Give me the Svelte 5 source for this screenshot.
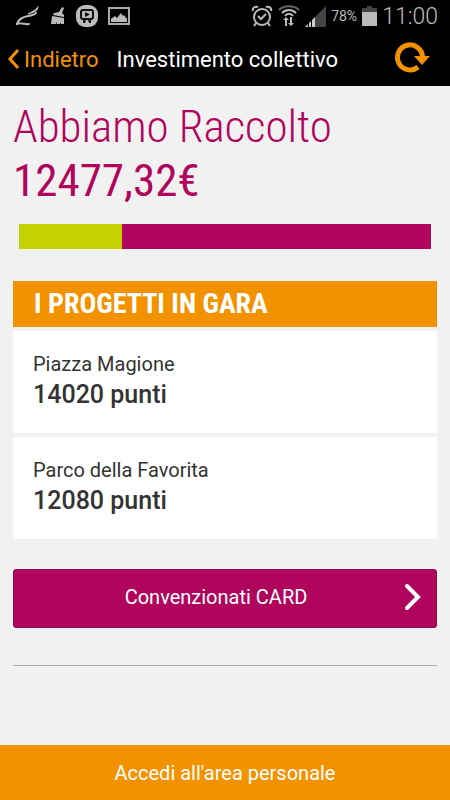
<script>
  let raised = "12477,32€";
  let progress = 25;

  let projects = [
    { id: 1, name: "Piazza Magione", points: 14020 },
    { id: 2, name: "Parco della Favorita", points: 12080 },
  ];
</script>

<div class="page">
  <!-- Status bar -->
  <div class="status-bar">
    <div class="status-group left">
      <svg width="24" height="22" viewBox="0 0 24 22" fill="none" stroke="#bbb" stroke-linecap="round">
        <path d="M20 8C16 12 10 10 6 13C4 14 2 16 1 19" stroke-width="2" />
        <path d="M1 19C5 17 9 20 13 19" stroke-width="2" />
        <path d="M22 2C22 6 17 8 12 9C15 7 19 6 22 2Z" fill="#bbb" />
      </svg>
      <svg width="16" height="20" viewBox="0 0 16 20">
        <path d="M12 1L14 2L12 7L14 9V11L3 9L4 7L9 6ZM2 10L14 12V18H11L10 16V18H7L6 16V18H1Z" fill="#bbb" />
      </svg>
      <svg width="22" height="22" viewBox="0 0 22 22">
        <rect width="22" height="22" rx="9" fill="#bbb" />
        <rect x="5" y="5" width="12" height="9" rx="2" fill="none" stroke="#111" stroke-width="2" />
        <path d="M9 7L14 9.5L9 12ZM7 15H10L9 18H7ZM12 15H15V18H13Z" fill="#111" />
      </svg>
      <svg width="22" height="20" viewBox="0 0 22 20">
        <rect x="1" y="2" width="20" height="16" fill="none" stroke="#aaa" stroke-width="2" />
        <path d="M3 16V13L7 10L9 12L13 7L15 10L16 9L19 13V16Z" fill="#bbb" />
      </svg>
    </div>

    <div class="status-group">
      <svg width="22" height="22" viewBox="0 0 22 22" fill="none" stroke="#bbb" stroke-width="2">
        <circle cx="11" cy="12" r="8" />
        <path d="M7 11L10 14L15 9M2 6C1 3 4 1 7 2M20 6C21 3 18 1 15 2M5 18L3 21M17 18L19 21" />
      </svg>
      <svg width="22" height="22" viewBox="0 0 22 22">
        <g fill="none" stroke-width="2">
          <path d="M1 5C6 0 16 0 21 5" stroke="#666" />
          <path d="M4 8C8 4 14 4 18 8M7 11C9 8 13 8 15 11" stroke="#bbb" />
        </g>
        <path d="M8 12L11 15H9V21H7V15H5ZM13 21L10 18H12V12H14V18H16Z" fill="#bbb" />
      </svg>
      <svg width="21" height="22" viewBox="0 0 21 22">
        <path d="M10 12L21 1V22H10Z" fill="#444" />
        <path d="M0 22L3 19V22ZM4 22V18L6 16V22ZM7 22V15L10 12V22Z" fill="#ccc" />
      </svg>
      <span class="battery-level">78%</span>
      <svg width="15" height="22" viewBox="0 0 15 22">
        <path d="M5 1H10V3H15V7H0V3H5Z" fill="#444" />
        <rect y="7" width="15" height="14" fill="#bbb" />
      </svg>
      <span class="clock">11:00</span>
    </div>
  </div>

  <!-- Header -->
  <header class="header">
    <a href="#back" class="back">
      <svg width="12" height="20" viewBox="0 0 12 20">
        <path d="M10 1L2 10L10 19" fill="none" stroke="#f39200" stroke-width="3" />
      </svg>
      Indietro
    </a>
    <h1>Investimento collettivo</h1>
    <button class="refresh" aria-label="Aggiorna">
      <svg width="36" height="32" viewBox="0 0 36 32">
        <path d="M24 26A12.5 12.5 0 1 1 28.5 16" fill="none" stroke="#f39200" stroke-width="5" />
        <path d="M20 15H36L28 24Z" fill="#f39200" />
      </svg>
    </button>
  </header>

  <!-- Main content -->
  <main class="content">
    <div class="summary">
      <p class="summary-title">Abbiamo Raccolto</p>
      <p class="summary-amount">{raised}</p>
    </div>

    <div class="progress">
      <div class="progress-fill" style="width: {progress}%"></div>
    </div>

    <section class="projects">
      <h2>I PROGETTI IN GARA</h2>
      {#each projects as project (project.id)}
        <div class="project">
          <p class="project-name">{project.name}</p>
          <p class="project-points">{project.points} punti</p>
        </div>
      {/each}
    </section>

    <button class="card-button">
      <span>Convenzionati CARD</span>
      <svg width="18" height="28" viewBox="0 0 18 28">
        <path d="M3 3L14 14L3 25" fill="none" stroke="#fff" stroke-width="4" stroke-linecap="round" />
      </svg>
    </button>

    <hr />
  </main>

  <button class="login-button">Accedi all'area personale</button>
</div>

<style>
  :global(body) {
    margin: 0;
    background: #f1f1f1;
  }

  .page {
    display: flex;
    flex-direction: column;
    min-height: 100vh;
    background: #f1f1f1;
    font-family: Roboto, "Liberation Sans", sans-serif;
  }

  h1,
  h2,
  p {
    margin: 0;
  }

  svg {
    display: block;
    flex-shrink: 0;
  }

  button {
    border: none;
    font-family: inherit;
    cursor: pointer;
  }

  .status-bar {
    display: flex;
    justify-content: space-between;
    align-items: center;
    height: 32px;
    padding: 0 12px 0 16px;
    background: #000;
    color: #bbb;
  }

  .status-group {
    display: flex;
    align-items: center;
    gap: 5px;
  }

  .status-group.left {
    gap: 10px;
  }

  .battery-level {
    font-size: 14px;
  }

  .clock {
    font-size: 23px;
    font-weight: 300;
  }

  .header {
    display: flex;
    align-items: center;
    height: 54px;
    padding: 0 20px 0 8px;
    background: #000;
  }

  .back {
    display: flex;
    align-items: center;
    gap: 4px;
    color: #f39200;
    font-size: 22px;
    text-decoration: none;
  }

  .header h1 {
    flex: 1;
    margin-left: 18px;
    color: #fff;
    font-size: 22px;
    font-weight: 400;
  }

  .refresh {
    padding: 0 0 5px;
    background: none;
  }

  .content {
    flex: 1;
    padding: 14px 13px;
  }

  .summary {
    color: #b0055d;
    font-family: "Roboto Condensed", Roboto, "Liberation Sans Narrow", sans-serif;
    font-size: 45px;
    line-height: 54px;
  }

  .summary-title {
    font-weight: 300;
  }

  .summary-amount {
    font-weight: 400;
  }

  .progress {
    height: 25px;
    margin: 16px 6px 32px;
    background: #b0055d;
  }

  .progress-fill {
    height: 100%;
    background: #c3d200;
  }

  .projects {
    display: flex;
    flex-direction: column;
    gap: 4px;
  }

  .projects h2 {
    padding: 0 21px;
    background: #f39200;
    color: #fff;
    font-family: "Roboto Condensed", Roboto, "Liberation Sans Narrow", sans-serif;
    font-size: 28px;
    font-weight: 700;
    line-height: 46px;
  }

  .project {
    padding: 20px;
    background: #fff;
    color: #333;
  }

  .project-name {
    font-size: 20px;
    line-height: 26px;
  }

  .project-points {
    font-size: 25px;
    font-weight: 500;
    line-height: 36px;
  }

  .card-button {
    display: flex;
    align-items: center;
    width: 100%;
    height: 59px;
    margin-top: 30px;
    padding: 0 14px 4px;
    border: 1px solid #8f0a50;
    border-radius: 3px;
    background: #b0055d;
    color: #fff;
    font-size: 20px;
  }

  .card-button span {
    flex: 1;
  }

  hr {
    margin: 37px 0 0;
    border: none;
    border-top: 1px solid #aaa;
  }

  .login-button {
    height: 55px;
    background: #f39200;
    color: #fff;
    font-size: 20px;
  }
</style>
